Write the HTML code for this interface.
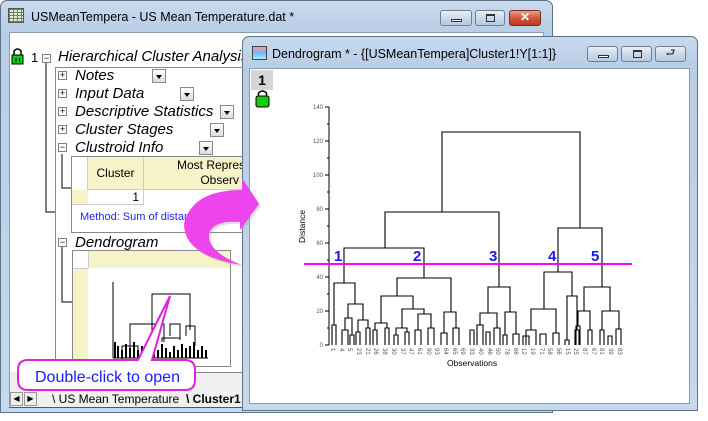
<!DOCTYPE html>
<html><head><meta charset="utf-8"><style>
*{margin:0;padding:0;box-sizing:border-box}
body{width:708px;height:421px;background:#fff;position:relative;overflow:hidden;font-family:"Liberation Sans",sans-serif}
.a{position:absolute}
.win{border:1px solid #5f7388;border-radius:7px 7px 0 0;background:linear-gradient(#c9daee,#b9cde6 30px,#c6d8ec);}
.btn{position:absolute;height:16px;border:1px solid #6d7f94;border-radius:3px;background:linear-gradient(#e9f0f8,#cbd9ea 50%,#b8cae0)}
.it{font-style:italic;font-size:15px;color:#000;position:absolute;white-space:nowrap}
.pb{position:absolute;width:9px;height:9px;border:1px solid #808080;background:#fff;font-size:9px;line-height:7px;text-align:center;color:#000}
.dd{position:absolute;width:14px;height:14px;border:1px solid #888;background:linear-gradient(#fff,#ddd)}
.dd:after{content:"";position:absolute;left:3px;top:5px;border:3.5px solid transparent;border-top:4px solid #000}
</style></head><body>

<!-- left window -->
<div class="a win" style="left:0;top:0;width:553px;height:413px"></div>
<div class="a" style="left:8px;top:8px;width:16px;height:15px;background:repeating-linear-gradient(90deg,#3a3 0 1px,transparent 1px 4px),repeating-linear-gradient(#3a3 0 1px,#fde 1px 3px);border:1px solid #555"></div>
<div class="a" style="left:31px;top:10px;font-size:12.5px;color:#000">USMeanTempera - US Mean Temperature.dat *</div>
<div class="btn" style="left:440px;top:10px;width:32px"><div class="a" style="left:10px;top:8px;width:11px;height:3px;border:1px solid #333;background:#fff"></div></div>
<div class="btn" style="left:475px;top:10px;width:30px"><div class="a" style="left:10px;top:3px;width:9px;height:8px;border:1px solid #333;border-top-width:2px"></div></div>
<div class="btn" style="left:509px;top:10px;width:32px;background:linear-gradient(#e8a08c,#d0573e 50%,#c0391f);border-color:#7a2a1a;color:#fff;font-weight:bold;font-size:12px;text-align:center;line-height:13px">✕</div>
<div class="a" style="left:9px;top:32px;width:535px;height:376px;background:#fff;border:1px solid #8b9bab"></div>
<div class="a" style="left:10px;top:372px;width:533px;height:35px;background:#f0f0f0"></div>

<!-- tree -->
<svg class="a" style="left:0;top:0" width="300" height="421">
 <rect x="12" y="55" width="11" height="9" fill="#1c1" stroke="#000"/>
 <path d="M14 55 V51 Q17.5 47 21 51 V55" fill="none" stroke="#000" stroke-width="1.5"/>
 <path d="M16 58 V62 M19.5 58 V62" stroke="#000"/>
 <path d="M46 62 V212 H56 M62 154 V188 H72 M62 246 V302 H72" fill="none" stroke="#000"/>
 <rect x="55.5" y="67.5" width="250" height="305" fill="none" stroke="#888"/>
</svg>
<div class="a" style="left:31px;top:50px;font-size:13px">1</div>
<div class="pb" style="left:42px;top:54px">−</div>
<div class="it" style="left:58px;top:48px">Hierarchical Cluster Analysis</div>
<div class="pb" style="left:58px;top:71px">+</div><div class="it" style="left:75px;top:67px">Notes</div><div class="dd" style="left:152px;top:69px"></div>
<div class="pb" style="left:58px;top:89px">+</div><div class="it" style="left:75px;top:85px">Input Data</div><div class="dd" style="left:180px;top:87px"></div>
<div class="pb" style="left:58px;top:107px">+</div><div class="it" style="left:75px;top:103px">Descriptive Statistics</div><div class="dd" style="left:220px;top:105px"></div>
<div class="pb" style="left:58px;top:125px">+</div><div class="it" style="left:75px;top:121px">Cluster Stages</div><div class="dd" style="left:210px;top:123px"></div>
<div class="pb" style="left:58px;top:143px">−</div><div class="it" style="left:75px;top:139px">Clustroid Info</div><div class="dd" style="left:199px;top:141px"></div>
<!-- table -->
<div class="a" style="left:71px;top:156px;width:180px;height:77px;border:1px solid #888;background:#fff"></div>
<div class="a" style="left:72px;top:157px;width:16px;height:33px;border-right:1px solid #ccc"></div>
<div class="a" style="left:88px;top:157px;width:56px;height:33px;background:#f7f3c8;border-right:1px solid #ccc;border-bottom:1px solid #ccc;font-size:12px;text-align:center;line-height:33px">Cluster</div>
<div class="a" style="left:144px;top:157px;width:110px;height:33px;background:#f7f3c8;border-bottom:1px solid #ccc;font-size:12px;padding-left:33px;line-height:15px;padding-top:1px">Most Repres<br>&nbsp;&nbsp;&nbsp;&nbsp;&nbsp;&nbsp;&nbsp;Observ</div>
<div class="a" style="left:72px;top:190px;width:16px;height:15px;background:#f7f3c8;border-bottom:1px solid #ccc"></div>
<div class="a" style="left:88px;top:190px;width:56px;height:15px;border-right:1px solid #ccc;border-bottom:1px solid #ccc;font-size:12px;text-align:right;padding-right:4px">1</div>
<div class="a" style="left:80px;top:211px;font-size:11px;color:#22f">Method: Sum of distances</div>
<div class="pb" style="left:58px;top:238px">−</div><div class="it" style="left:75px;top:234px">Dendrogram</div>
<div class="a" style="left:72px;top:250px;width:159px;height:117px;border:1px solid #888;background:#fff"></div>
<div class="a" style="left:88px;top:251px;width:142px;height:17px;background:#f7f3c8;border-left:1px solid #ccc"></div>
<div class="a" style="left:73px;top:268px;width:15px;height:98px;background:#f7f3c8;border-top:1px solid #ccc"></div>
<svg class="a" style="left:100px;top:280px" width="115" height="80">
 <path d="M13 2 V78 M13 78 H108" stroke="#000" fill="none"/>
 <path d="M52 60 V14 H90 V50 M30 68 V44 H64 V62 M22 80 V66 H38 V72 M70 56 V44 H80 V60 M86 56 V46 H95 V66 M62 62 V58 H80" stroke="#000" fill="none"/>
 <path d="M15 78 V62 M18 78 V66 M22 78 V70 M26 78 V64 M30 78 V68 M34 78 V62 M38 78 V70 M42 78 V66 M46 78 V68 M50 78 V72 M54 78 V66 M58 78 V70 M62 78 V64 M66 78 V68 M70 78 V72 M74 78 V66 M78 78 V70 M82 78 V64 M86 78 V68 M90 78 V66 M94 78 V62 M98 78 V70 M102 78 V66 M106 78 V70" stroke="#000" stroke-width="2"/>
</svg>
<!-- tabs -->
<div class="a" style="left:10px;top:392px;width:13px;height:14px;border:1px solid #999;background:#eee;font-size:8px;text-align:center;line-height:12px">◀</div>
<div class="a" style="left:24px;top:392px;width:13px;height:14px;border:1px solid #999;background:#eee;font-size:8px;text-align:center;line-height:12px">▶</div>
<div class="a" style="left:52px;top:392px;font-size:12px">\ US Mean Temperature</div>
<div class="a" style="left:186px;top:392px;font-size:12px;font-weight:bold">\ Cluster1</div>
<div class="a" style="left:9px;top:407px;width:240px;height:1px;background:#555"></div>

<!-- callout -->
<svg class="a" style="left:0;top:0" width="260" height="421">
 <path d="M28 360 H138 L170 296 L152 360 H185 Q195 360 195 370 V380 Q195 390 185 390 H28 Q18 390 18 380 V370 Q18 360 28 360 Z" fill="#fff" stroke="#e020e0" stroke-width="2"/>
 <text x="35" y="382" font-family="Liberation Sans" font-size="16" fill="#1a1aff">Double-click to open</text>
</svg>

<!-- right window -->
<div class="a win" style="left:242px;top:36px;width:456px;height:375px"></div>
<div class="a" style="left:252px;top:46px;width:15px;height:14px;border:1px solid #444;background:linear-gradient(#f99,#6bf,#aef)"></div>
<div class="a" style="left:272px;top:47px;font-size:12.5px">Dendrogram * - {[USMeanTempera]Cluster1!Y[1:1]}</div>
<div class="btn" style="left:587px;top:46px;width:31px"><div class="a" style="left:10px;top:8px;width:11px;height:3px;border:1px solid #333;background:#fff"></div></div>
<div class="btn" style="left:621px;top:46px;width:31px"><div class="a" style="left:11px;top:3px;width:9px;height:8px;border:1px solid #333;border-top-width:2px"></div></div>
<div class="btn" style="left:655px;top:46px;width:31px;font-size:11px;text-align:center;line-height:13px;color:#333">⮐</div>
<div class="a" style="left:249px;top:68px;width:441px;height:336px;background:#fff;border:1px solid #8b9bab"></div>
<div class="a" style="left:251px;top:70px;width:22px;height:20px;background:#d6d6d6;font-size:14px;font-weight:bold;text-align:center;line-height:20px">1</div>
<svg class="a" style="left:0;top:0" width="708" height="421" font-family="Liberation Sans">
 <rect x="256" y="96" width="13" height="11" rx="2" fill="#1c1" stroke="#000"/>
 <path d="M258.5 96 V93 Q262.5 89 266.5 93 V96" fill="none" stroke="#000" stroke-width="1.5"/>
 <!-- axis -->
 <path d="M329 107 V345 M325 345 H329 M325 311 H329 M325 277 H329 M325 243 H329 M325 209 H329 M325 175 H329 M325 141 H329 M325 107 H329 M327 328 H329 M327 294 H329 M327 260 H329 M327 226 H329 M327 192 H329 M327 158 H329 M327 124 H329" stroke="#000" fill="none"/>
 <g font-size="6" fill="#555" text-anchor="end">
  <text x="323" y="347">0</text><text x="323" y="313">20</text><text x="323" y="279">40</text><text x="323" y="245">60</text><text x="323" y="211">80</text><text x="323" y="177">100</text><text x="323" y="143">120</text><text x="323" y="109">140</text>
 </g>
 <text transform="translate(305,243) rotate(-90)" font-size="8.5" fill="#000">Distance</text>
 <text x="447" y="366" font-size="8.5" fill="#000">Observations</text>
 <g fill="none" stroke="#000" stroke-width="1.1">
 <path d="M442 212 V132 H580 V228 M385 248 V212 H499 V287 M344 283 V248 H424 V278 M558 272 V228 H602 V287"/>
 <path d="M334 325 V283 H355 V304 M332 345 V325 H336 V345 M348 318 V304 H363 V320 M345 330 V318 H352 V335 M342 345 V330 H348 V345 M350 345 V335 H354 V345 M358 332 V320 H368 V328 M356 345 V332 H360 V345 M366 345 V328 H370 V345"/>
 <path d="M397 296 V278 H451 V312 M381 323 V296 H413 V309 M375 330 V323 H387 V328 M373 345 V330 H377 V345 M385 345 V328 H389 V345 M402 328 V309 H424 V314 M396 335 V328 H407 V332 M394 345 V335 H398 V345 M405 345 V332 H409 V345 M418 330 V314 H431 V328 M415 345 V330 H421 V345 M428 345 V328 H434 V345 M444 333 V312 H456 V328 M441 345 V333 H447 V345 M453 345 V328 H459 V345"/>
 <path d="M488 313 V287 H510 V312 M480 325 V313 H497 V328 M477 345 V325 H483 V345 M494 345 V328 H500 V345 M505 335 V312 H516 V334 M503 345 V335 H507 V345 M513 345 V334 H519 V345 M470 345 V330 H474 V345 M486 345 V332 H490 V345"/>
 <path d="M544 309 V272 H572 V296 M531 330 V309 H556 V333 M526 345 V330 H536 V345 M523 345 V336 H529 V345 M540 345 V334 H546 V345 M553 345 V333 H559 V345 M567 340 V296 H577 V330 M565 345 V340 H569 V345 M575 345 V330 H579 V345"/>
 <path d="M578 326 V311 H590 V330 M576 345 V326 H580 V345 M588 345 V330 H592 V345 M584 311 V287 H610 V311 M602 330 V311 H619 V329 M600 345 V330 H604 V345 M616 345 V329 H621 V345 M608 345 V336 H612 V345"/>
 </g>
 <g font-size="6" fill="#555">
  <text transform="translate(331,348) rotate(90)">1</text><text transform="translate(340,348) rotate(90)">4</text><text transform="translate(348,348) rotate(90)">5</text><text transform="translate(357,348) rotate(90)">23</text><text transform="translate(366,348) rotate(90)">21</text><text transform="translate(374,348) rotate(90)">26</text><text transform="translate(383,348) rotate(90)">38</text><text transform="translate(392,348) rotate(90)">30</text><text transform="translate(401,348) rotate(90)">37</text><text transform="translate(409,348) rotate(90)">47</text><text transform="translate(418,348) rotate(90)">61</text><text transform="translate(427,348) rotate(90)">90</text><text transform="translate(435,348) rotate(90)">93</text><text transform="translate(444,348) rotate(90)">64</text><text transform="translate(453,348) rotate(90)">65</text><text transform="translate(461,348) rotate(90)">69</text><text transform="translate(470,348) rotate(90)">33</text><text transform="translate(479,348) rotate(90)">40</text><text transform="translate(488,348) rotate(90)">46</text><text transform="translate(496,348) rotate(90)">50</text><text transform="translate(505,348) rotate(90)">78</text><text transform="translate(514,348) rotate(90)">66</text><text transform="translate(522,348) rotate(90)">12</text><text transform="translate(531,348) rotate(90)">19</text><text transform="translate(540,348) rotate(90)">71</text><text transform="translate(548,348) rotate(90)">58</text><text transform="translate(557,348) rotate(90)">56</text><text transform="translate(566,348) rotate(90)">15</text><text transform="translate(574,348) rotate(90)">25</text><text transform="translate(583,348) rotate(90)">87</text><text transform="translate(592,348) rotate(90)">67</text><text transform="translate(600,348) rotate(90)">81</text><text transform="translate(609,348) rotate(90)">39</text><text transform="translate(618,348) rotate(90)">83</text>
 </g>
 <line x1="304" y1="264" x2="632" y2="264" stroke="#f0f" stroke-width="2"/>
 <g font-size="15" font-weight="bold" fill="#1a1aee">
  <text x="334" y="261">1</text><text x="413" y="261">2</text><text x="489" y="261">3</text><text x="548" y="261">4</text><text x="591" y="261">5</text>
 </g>
 <!-- big magenta arrow -->
 <path d="M242 265 Q207 252 209 234 Q213 220 240 222 L240 230 L259 204 L242 178 L242 190 Q192 190 184 224 Q184 256 242 265 Z" fill="#a0a0a0" opacity=".35" transform="translate(2,2)"/>
 <path d="M242 265 Q207 252 209 234 Q213 220 240 222 L240 230 L259 204 L242 178 L242 190 Q192 190 184 224 Q184 256 242 265 Z" fill="#ee44ee"/>
</svg>
</body></html>
